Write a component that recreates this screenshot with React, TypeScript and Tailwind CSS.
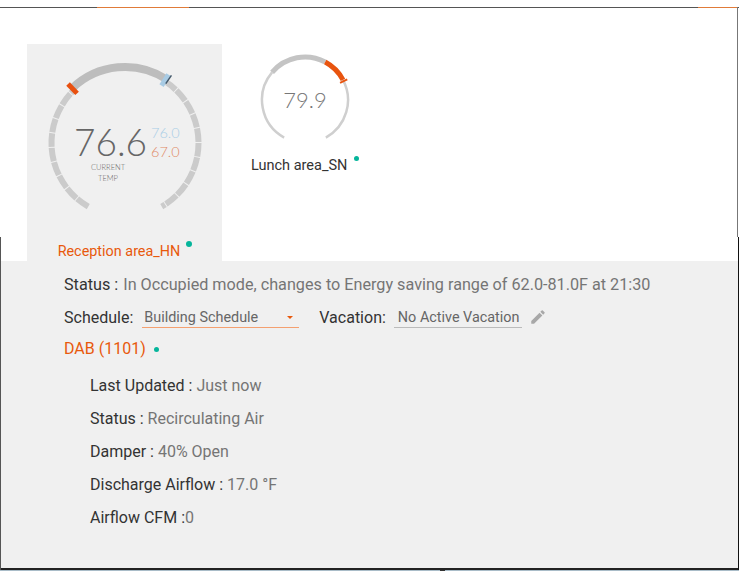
const Dot = ({ className = '' }: { className?: string }) => (
  <span className={`inline-block rounded-full bg-[#05b59b] ${className}`} />
);

const DabRow = ({ label, value }: { label: string; value: string }) => (
  <p className="text-[16px] leading-[20px] text-[#333333]">
    {label}
    <span className="text-[#757575]">{value}</span>
  </p>
);

const polar = (cx: number, cy: number, r: number, deg: number) => {
  const a = ((deg - 90) * Math.PI) / 180;
  return [cx + r * Math.cos(a), cy + r * Math.sin(a)];
};

const arc = (cx: number, cy: number, r: number, from: number, to: number) => {
  const [x1, y1] = polar(cx, cy, r, from);
  const [x2, y2] = polar(cx, cy, r, to);
  return `M${x1} ${y1}A${r} ${r} 0 ${to - from > 180 ? 1 : 0} 1 ${x2} ${y2}`;
};

const tick = (cx: number, cy: number, r1: number, r2: number, deg: number) => {
  const [x1, y1] = polar(cx, cy, r1, deg);
  const [x2, y2] = polar(cx, cy, r2, deg);
  return `M${x1} ${y1}L${x2} ${y2}`;
};

const MainGauge = () => (
  <svg width="195" height="190" viewBox="0 0 195 190" className="block">
    <path d={arc(98, 99, 73.5, -150, -44)} fill="none" stroke="#cbcbcb" strokeWidth="6" strokeDasharray="13.6 1" />
    <path d={arc(98, 99, 73.5, 33, 150)} fill="none" stroke="#cbcbcb" strokeWidth="6" strokeDasharray="13.6 1" />
    <path d={arc(98, 99, 76, -44, 33)} fill="none" stroke="#bdbdbd" strokeWidth="8" />
    <path d={tick(98, 99, 69, 82, -44)} stroke="#e8500f" strokeWidth="5" />
    <path d={tick(98, 99, 68, 81, 32.5)} stroke="#a8cbe4" strokeWidth="5" />
    <path d={tick(98, 99, 72, 82, 34.5)} stroke="#44586a" strokeWidth="1.5" />
  </svg>
);

const SmallGauge = () => (
  <svg width="92" height="92" viewBox="0 0 92 92" className="block">
    <path d={arc(46, 46, 43, -151, -50)} fill="none" stroke="#cfcfcf" strokeWidth="2.5" />
    <path d={arc(46, 46, 43, 62, 151)} fill="none" stroke="#cfcfcf" strokeWidth="2.5" />
    <path d={arc(46, 46, 43, -50, 28)} fill="none" stroke="#c4c4c4" strokeWidth="5" />
    <path d={arc(46, 46, 43, 28, 62)} fill="none" stroke="#e8540f" strokeWidth="5" />
    <path d={tick(46, 46, 39, 47, 64)} stroke="#e8540f" strokeWidth="2" />
  </svg>
);

export default function App() {
  return (
    <div className="relative h-[571px] w-[739px] overflow-hidden bg-white font-['Roboto',sans-serif]">
      <div className="absolute inset-x-0 top-[7px] h-px bg-[#555555]" />
      <div className="absolute left-[97px] top-[7px] h-px w-[92px] bg-[#e07b39]" />
      <div className="absolute left-[698px] top-[7px] h-px w-[39px] bg-[#e07b39]" />
      <div className="absolute right-[1px] top-[7px] h-[230px] w-px bg-[#777777]" />
      <div className="absolute right-0 top-[237px] h-[333px] w-px bg-[#111111]" />
      <div className="absolute left-0 top-[237px] h-[333px] w-px bg-[#555555]" />
      <div className="absolute left-[440px] top-[570px] h-px w-[5px] bg-[#333333]" />

      <div className="flex h-[261px] items-start pl-[27px] pt-[44px]">
        <div className="flex h-[217px] w-[195px] flex-col items-center bg-[#f0f0f0]">
          <div className="relative h-[190px] w-full">
            <MainGauge />
            <div className="absolute left-[47px] top-[78px] flex items-start">
              <span className="font-['Lato',sans-serif] text-[37px] font-light leading-[40px] text-[#666666]">76.6</span>
              <span className="ml-[4px] flex flex-col pt-[1px] font-['Lato',sans-serif] text-[14.5px] font-light leading-[19px]">
                <span className="text-[#a9cde6]">76.0</span>
                <span className="text-[#e08a66]">67.0</span>
              </span>
            </div>
            <div className="absolute left-[60px] top-[118px] w-[42px] text-center font-['Lato',sans-serif] text-[7.5px] font-light leading-[11px] text-[#666666]">
              CURRENT TEMP
            </div>
          </div>
          <div className="relative mr-[11px] mt-[9px] text-[14.4px] leading-[18px] text-[#e8590c]">
            Reception area_HN
            <Dot className="absolute right-[-12px] top-[-2px] h-[6px] w-[6px]" />
          </div>
        </div>
        <div className="ml-[37px] flex flex-col items-start pt-[10px]">
          <div className="relative">
            <SmallGauge />
            <span className="absolute inset-x-0 top-[32px] text-center font-['Lato',sans-serif] text-[22px] font-light leading-[28px] text-[#777777]">
              79.9
            </span>
          </div>
          <div className="relative ml-[-8px] mt-[11px] whitespace-nowrap text-[14.5px] leading-[18px] text-[#333333]">
            Lunch area_SN
            <Dot className="absolute right-[-12px] top-[-1px] h-[5px] w-[5px]" />
          </div>
        </div>
      </div>

      <div className="ml-px mr-[1px] h-[309px] border-b-2 border-[#222222] bg-[#f0f0f0] pl-[63px] pt-[14px]">
        <p className="text-[16.2px] leading-[20px] text-[#333333]">
          Status : <span className="ml-[1px] text-[#757575]">In Occupied mode, changes to Energy saving range of 62.0-81.0F at 21:30</span>
        </p>
        <div className="mt-[11px] flex items-center text-[16px] leading-[20px] text-[#333333]">
          <span className="pt-[2px]">Schedule:</span>
          <div className="ml-[9px] flex h-[22px] w-[157px] items-center justify-between border-b border-[#f4a070] pl-[2px] pr-[6px] pt-[2px] text-[14.4px] text-[#666666]">
            <span>Building Schedule</span>
            <span className="h-0 w-0 border-x-[3px] border-t-[3px] border-x-transparent border-t-[#e8590c]" />
          </div>
          <span className="ml-[20px] pt-[2px]">Vacation:</span>
          <div className="ml-[8px] flex h-[22px] w-[128px] items-center border-b border-[#bbbbbb] pl-[4px] pt-[2px] text-[14.4px] text-[#666666]">
            No Active Vacation
          </div>
          <svg width="18" height="18" viewBox="0 0 24 24" className="ml-[7px]" fill="#a8a8a8">
            <path d="M3 17.25V21h3.75L17.81 9.94l-3.75-3.75L3 17.25zM20.71 7.04a1 1 0 0 0 0-1.41l-2.34-2.34a1 1 0 0 0-1.41 0l-1.83 1.83 3.75 3.75 1.83-1.83z" />
          </svg>
        </div>
        <div className="mt-[11px] flex items-center text-[16px] leading-[20px] text-[#e8590c]">
          DAB (1101)
          <Dot className="ml-[8px] h-[5px] w-[5px]" />
        </div>
        <div className="mt-[17px] flex flex-col gap-[13px] pl-[26px]">
          <DabRow label="Last Updated : " value="Just now" />
          <DabRow label="Status : " value="Recirculating Air" />
          <DabRow label="Damper : " value="40% Open" />
          <DabRow label="Discharge Airflow : " value="17.0 °F" />
          <DabRow label="Airflow CFM :" value="0" />
        </div>
      </div>
      <div className="h-px bg-[#a9bcc8]" />
    </div>
  );
}
